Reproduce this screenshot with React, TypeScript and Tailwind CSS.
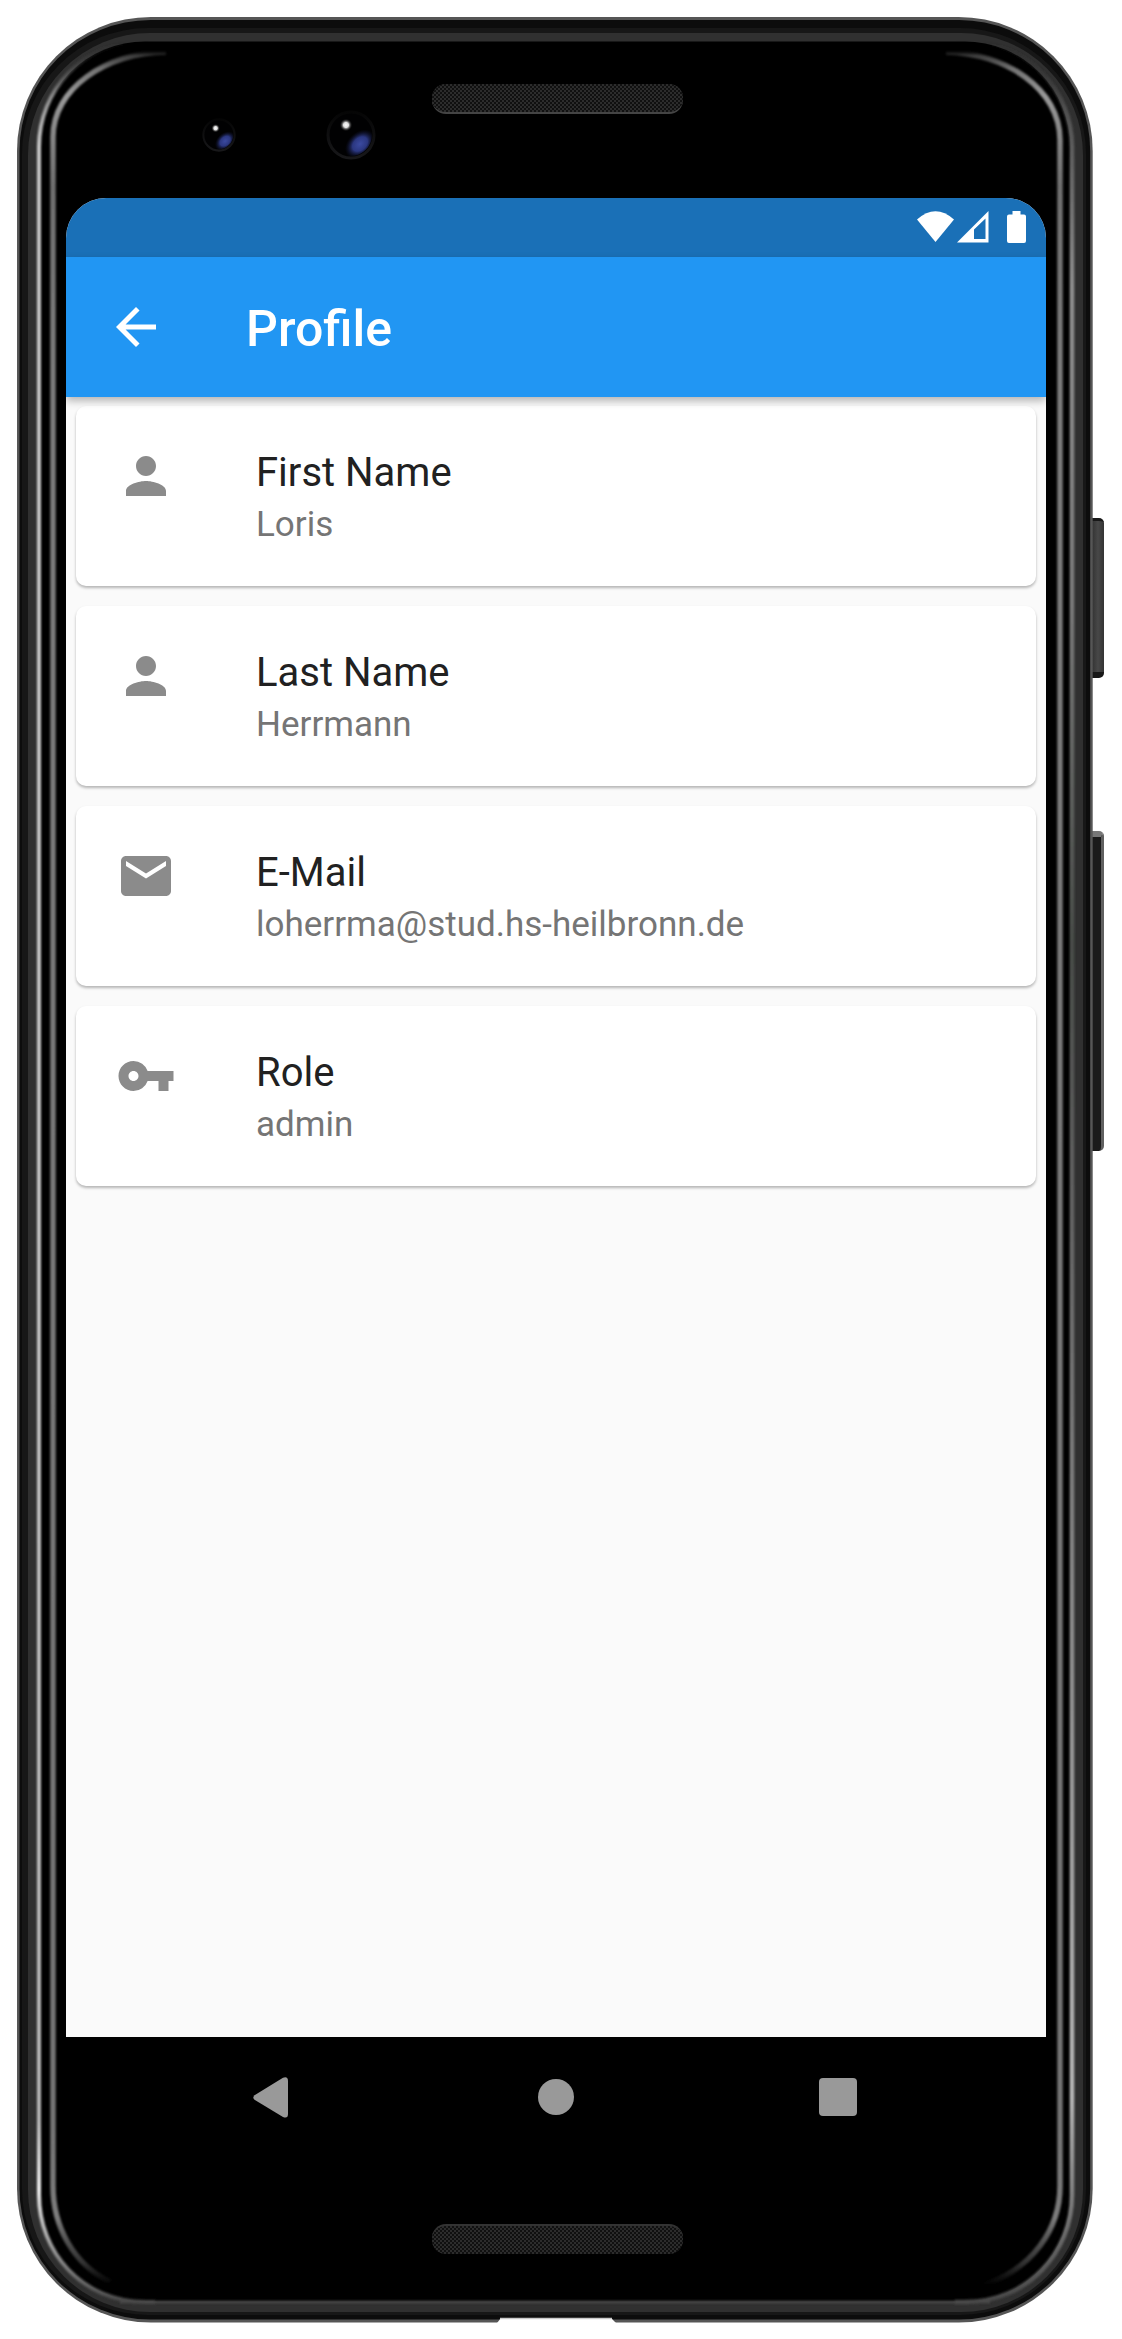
import React from "react";
import { MdArrowBack, MdPerson, MdEmail, MdVpnKey } from "react-icons/md";

const fields = [
  { label: "First Name", value: "Loris", Icon: MdPerson },
  { label: "Last Name", value: "Herrmann", Icon: MdPerson },
  { label: "E-Mail", value: "loherrma@stud.hs-heilbronn.de", Icon: MdEmail },
  { label: "Role", value: "admin", Icon: MdVpnKey },
];

function Bezel() {
  return (
    <svg className="pointer-events-none absolute inset-0" width="1122" height="2339" viewBox="0 0 1122 2339" fill="none">
      <defs>
        <linearGradient id="leftEdge" gradientUnits="userSpaceOnUse" x1="0" y1="40" x2="0" y2="2302">
          <stop offset="0" stopColor="#333" stopOpacity="0" />
          <stop offset="0.025" stopColor="#888" />
          <stop offset="0.045" stopColor="#c8c8c8" />
          <stop offset="0.5" stopColor="#c8c8c8" />
          <stop offset="0.92" stopColor="#b8b8b8" />
          <stop offset="0.95" stopColor="#f0f0f0" />
          <stop offset="0.98" stopColor="#8a8a8a" />
          <stop offset="1" stopColor="#484848" />
        </linearGradient>
        <linearGradient id="rightEdge" gradientUnits="userSpaceOnUse" x1="0" y1="40" x2="0" y2="2302">
          <stop offset="0" stopColor="#333" stopOpacity="0" />
          <stop offset="0.03" stopColor="#505050" />
          <stop offset="0.11" stopColor="#909090" />
          <stop offset="0.25" stopColor="#7a7a7a" />
          <stop offset="0.4" stopColor="#484c48" />
          <stop offset="0.5" stopColor="#606060" />
          <stop offset="0.91" stopColor="#b8b8b8" />
          <stop offset="0.96" stopColor="#777" />
          <stop offset="1" stopColor="#484848" />
        </linearGradient>
        <linearGradient id="glint" gradientUnits="userSpaceOnUse" x1="0" y1="51" x2="0" y2="2285">
          <stop offset="0" stopColor="#666" stopOpacity="0" />
          <stop offset="0.002" stopColor="#777" stopOpacity="0.5" />
          <stop offset="0.008" stopColor="#888" stopOpacity="0.85" />
          <stop offset="0.02" stopColor="#999" />
          <stop offset="0.06" stopColor="#707070" />
          <stop offset="0.15" stopColor="#7c7c7c" />
          <stop offset="0.93" stopColor="#747474" />
          <stop offset="0.97" stopColor="#8a8a8a" stopOpacity="0.9" />
          <stop offset="0.99" stopColor="#666" stopOpacity="0.5" />
          <stop offset="1" stopColor="#555" stopOpacity="0" />
        </linearGradient>
        <filter id="soft" x="-5%" y="-1%" width="110%" height="102%">
          <feGaussianBlur stdDeviation="1" />
        </filter>
      </defs>
      <rect x="17" y="17" width="1075.7" height="2305.5" rx="134" fill="#565656" />
      <rect x="19.5" y="20" width="1070.7" height="2299.5" rx="131" fill="#0c0c0c" />
      <rect x="22" y="28" width="1064" height="2287" rx="126" fill="#171717" />
      <rect x="28" y="33" width="1055" height="2279" rx="122" fill="#303030" />
      <rect x="39" y="41.5" width="1031.5" height="2260" rx="106" fill="#000" />
      <g filter="url(#soft)">
        <path d="M150 41H146C82 41 39 91 39 147V2195C39 2252 82 2302 146 2302H155" stroke="url(#leftEdge)" strokeWidth="4" />
        <path d="M955 41H965C1028 41 1072 91 1072 147V2195C1072 2252 1028 2302 965 2302H955" stroke="url(#rightEdge)" strokeWidth="4.5" />
        <path d="M120 2302H990" stroke="#484848" strokeWidth="2.5" />
        <path d="M166 52C105 53 53 89 53 137V2186C53 2226 73 2264 110 2282" stroke="url(#glint)" strokeWidth="5.5" />
        <path d="M946 52C1006 53 1060 89 1060 140V2186C1060 2230 1032 2268 985 2285" stroke="url(#glint)" strokeWidth="5.5" />
      </g>
      <path d="M497 2323l4-5h110l5 5z" fill="#fff" />
      <path d="M500 2318.500h112" stroke="#c8c8c8" strokeWidth="1.500" />
    </svg>
  );
}

function Lens({ className, size }: { className: string; size: number }) {
  return (
    <svg className={className} width={size} height={size} viewBox="0 0 50 50">
      <defs>
        <radialGradient id="lensBlue">
          <stop offset="0" stopColor="#3b4aa0" />
          <stop offset="0.5" stopColor="#2b3780" />
          <stop offset="1" stopColor="#101433" stopOpacity="0" />
        </radialGradient>
        <radialGradient id="lensSpark">
          <stop offset="0" stopColor="#fff" />
          <stop offset="0.4" stopColor="#ddd" />
          <stop offset="1" stopColor="#000" stopOpacity="0" />
        </radialGradient>
        <linearGradient id="lensRim" x1="0" y1="0" x2="0" y2="1">
          <stop offset="0" stopColor="#050505" />
          <stop offset="1" stopColor="#18181a" />
        </linearGradient>
        <clipPath id="lensClip"><circle cx="25" cy="25" r="21" /></clipPath>
      </defs>
      <circle cx="25" cy="25" r="23" fill="#010102" stroke="url(#lensRim)" strokeWidth="3" />
      <g clipPath="url(#lensClip)">
        <ellipse cx="34" cy="34" rx="17" ry="12" transform="rotate(-42 34 34)" fill="url(#lensBlue)" />
      </g>
      <circle cx="20" cy="15" r="6.500" fill="url(#lensSpark)" />
    </svg>
  );
}

function Grille({ className }: { className: string }) {
  return (
    <div className={`ml-[3px] h-[30px] w-[251px] shrink-0 rounded-[14px] bg-[#1c1c1c] bg-[conic-gradient(#2c2c2c_25%,#101010_0_50%,#2c2c2c_0_75%,#101010_0)] bg-[length:4px_4px] ${className}`} />
  );
}

export default function App() {
  return (
    <div className="relative h-[2339px] w-[1122px] overflow-hidden bg-white font-[Roboto,sans-serif]">
      <div className="absolute left-[1092px] top-[518px] h-[160px] w-[12px] rounded-r-[5px] border-b-[6px] border-t-[3px] border-[#181818] bg-linear-to-r from-[#333] via-[#484848] to-[#333]" />
      <div className="absolute left-[1092px] top-[831px] h-[320px] w-[12px] rounded-r-[5px] border-r-[3px] border-t-[6px] border-r-[#606060] border-t-[#777] bg-[#1a1a1a]" />
      <Bezel />
      <Lens className="absolute left-[202px] top-[118px]" size={34} />
      <Lens className="absolute left-[326px] top-[110px]" size={50} />

      <div className="relative flex h-full flex-col items-center pr-[10px]">
        <Grille className="mt-[84px] border-b-2 border-[#444]" />
        <main className="mt-[84px] flex h-[1839px] w-[980px] shrink-0 flex-col overflow-hidden rounded-t-[40px] bg-[#fafafa]">
          <div className="flex h-[59px] shrink-0 items-start justify-end bg-[#1a70b7] pr-[20px] pt-[13px] text-white">
            <svg width="37" height="31" viewBox="0 0 37 31" fill="currentColor"><path d="M0 8.500Q18.500-8 37 8.500L18.500 31Z" /></svg>
            <svg className="ml-[3px]" width="32" height="32" viewBox="0 0 32 32" fill="currentColor"><path fillRule="evenodd" d="M0 31.500L31.500 0V31.500ZM17 18.500V28H28.500V7.500Z" /></svg>
            <svg className="ml-[18px]" width="19" height="32" viewBox="0 0 19 32" fill="currentColor"><path d="M5.500 0H13.500V3.500H17Q19 3.500 19 5.500V30Q19 32 17 32H2Q0 32 0 30V5.500Q0 3.500 2 3.500H5.500Z" /></svg>
          </div>
          <header className="relative z-10 flex h-[140px] shrink-0 items-center bg-[#2196f3] pl-[40px] text-white shadow-[0_4px_8px_rgba(0,0,0,0.28)]">
            <MdArrowBack className="size-[60px]" />
            <h1 className="ml-[80px] pt-[3px] text-[50px] leading-[60px] font-medium">Profile</h1>
          </header>
          <section className="flex flex-col gap-[20px] px-[10px] pt-[9px]">
            {fields.map(({ label, value, Icon }) => (
              <article key={label} className="flex h-[180px] rounded-[10px] bg-white pl-[40px] pt-[40px] shadow-[0_2px_3px_rgba(0,0,0,0.28)]">
                <Icon className="size-[60px] text-[#8b8b8b]" />
                <div className="ml-[80px] pt-[3px]">
                  <h2 className="text-[40px] leading-[47px] text-[#212121]">{label}</h2>
                  <p className="mt-[8px] text-[35px] leading-[41px] text-[#757575]">{value}</p>
                </div>
              </article>
            ))}
          </section>
        </main>
        <nav className="flex h-[120px] w-[980px] shrink-0 items-center">
          <svg className="ml-[187px]" width="35" height="41" viewBox="0 0 35 41" fill="#999"><path d="M1.500 18.200L30 .700Q35-1 35 4V37Q35 42 30 40L1.500 22.800Q-.800 20.500 1.500 18.200Z" /></svg>
          <div className="ml-[250px] size-[36px] rounded-full bg-[#999]" />
          <div className="ml-[245px] size-[38px] rounded-[4px] bg-[#999]" />
        </nav>
        <Grille className="mt-[67px] border-t-2 border-[#333]" />
      </div>
    </div>
  );
}
